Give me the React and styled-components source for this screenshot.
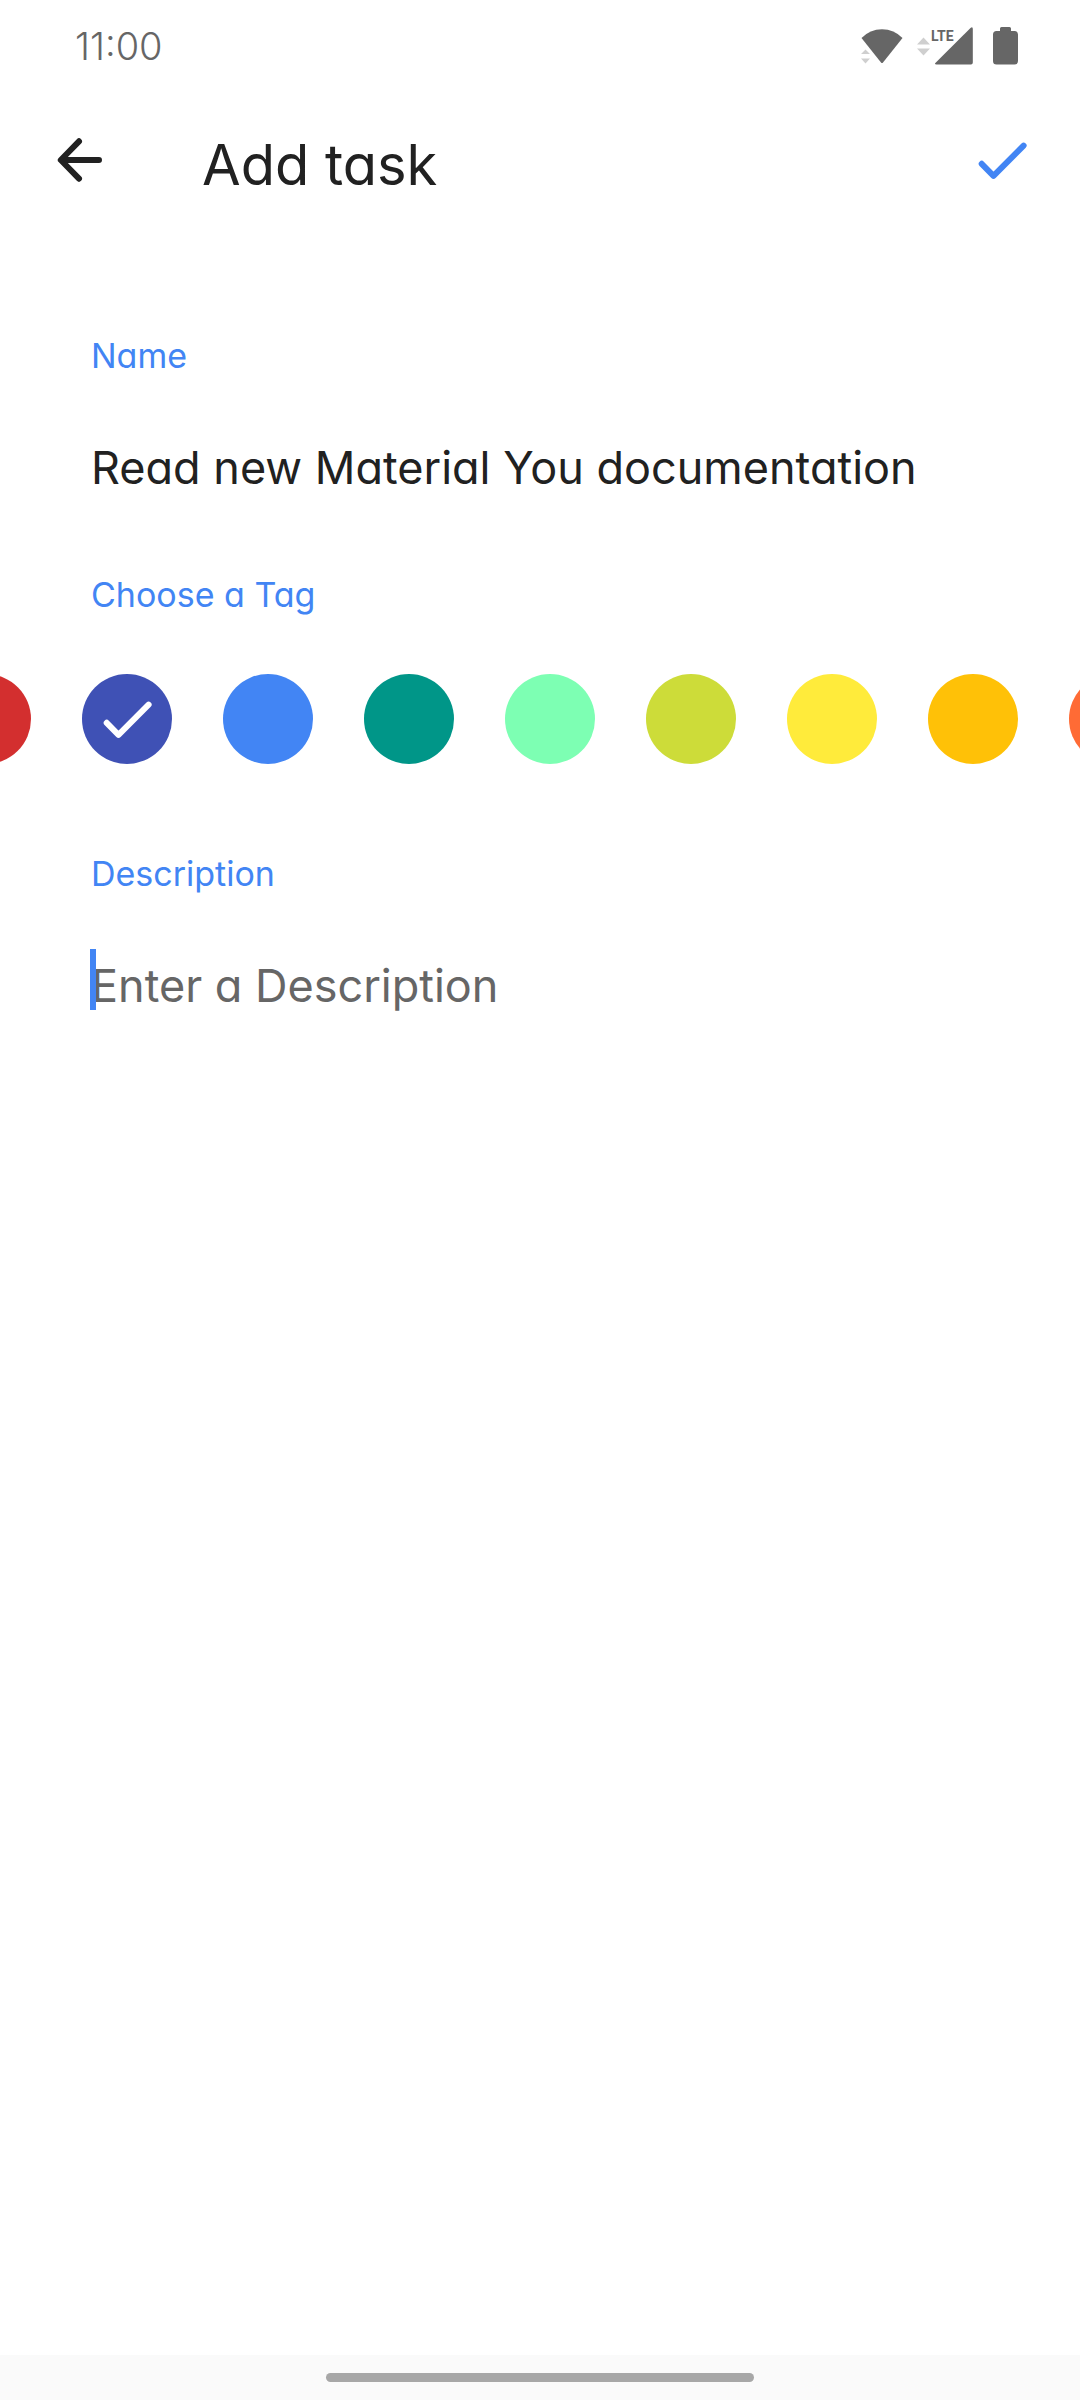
import React, { useLayoutEffect, useRef, useState } from "react";
import styled, { createGlobalStyle } from "styled-components";

const BLUE = "#4285f4";
const INK = "#212121";
const GREY = "#666666";

const GlobalStyle = createGlobalStyle`
  *, *::before, *::after { box-sizing: border-box; }
  body {
    margin: 0;
    background: #fff;
    color: ${INK};
    font-family: Inter, "Noto Sans", sans-serif;
    font-feature-settings: "cv11";
  }
`;

const Screen = styled.div`
  display: flex;
  flex-direction: column;
  min-height: 100vh;
  overflow: hidden;
`;

const StatusBar = styled.div`
  display: flex;
  align-items: center;
  justify-content: space-between;
  height: 92px;
  padding: 0 62px 0 75px;
  color: ${GREY};
`;

const Clock = styled.time`
  font-size: 38px;
  font-weight: 300;
  line-height: 48px;
`;

const StatusIcons = styled.div`
  display: flex;
  align-items: center;
  gap: 14px;

  svg {
    display: block;
  }
`;

const AppBar = styled.header`
  display: flex;
  align-items: center;
  height: 136px;
  padding: 0 46px 0 48px;
`;

const IconButton = styled.button`
  width: 64px;
  height: 64px;
  padding: 0;
  border: 0;
  background: none;
  color: ${(p) => p.$color};
  cursor: pointer;
`;

const Title = styled.h1`
  flex: 1;
  margin: 0;
  padding: 10px 0 0 90px;
  font-size: 56px;
  font-weight: 400;
  line-height: 64px;
`;

const Glyph = styled.svg`
  display: block;
  width: 64px;
  height: 64px;
  fill: none;
  stroke: currentColor;
  stroke-width: 6;
  stroke-linecap: round;
  stroke-linejoin: round;
`;

const Form = styled.form`
  flex: 1;
  display: flex;
  flex-direction: column;
  gap: 72px;
  padding-top: 104px;
`;

const Field = styled.div`
  display: flex;
  flex-direction: column;
  gap: 55px;
  padding: 0 91px;
`;

const labelText = `
  color: ${BLUE};
  font-size: 34px;
  font-weight: 400;
  line-height: 48px;
`;

const Label = styled.label`
  ${labelText}
`;

const InputBox = styled.div`
  position: relative;
`;

const TextInput = styled.input`
  display: block;
  width: 100%;
  height: 64px;
  padding: 0;
  border: 0;
  outline: 0;
  background: none;
  color: ${INK};
  font: inherit;
  font-size: 45px;
  font-feature-settings: inherit;
  caret-color: ${BLUE};

  &::placeholder {
    color: ${GREY};
    opacity: 1;
  }
`;

const Caret = styled.span`
  position: absolute;
  top: -4px;
  left: -1px;
  width: 6px;
  height: 61px;
  background: ${BLUE};
`;

const TagGroup = styled.fieldset`
  min-width: 0;
  margin: 0;
  padding: 0 0 14px;
  border: 0;
`;

const TagLegend = styled.legend`
  ${labelText}
  padding: 0 91px;
`;

const TagScroller = styled.div`
  display: flex;
  gap: 51px;
  padding: 55px 82px 0;
  overflow-x: auto;
  scrollbar-width: none;
`;

const Swatch = styled.label`
  flex: none;
  display: grid;
  place-items: center;
  width: 90px;
  height: 90px;
  border-radius: 50%;
  background: ${(p) => p.$color};
  color: #fff;
  cursor: pointer;
`;

const SwatchRadio = styled.input`
  grid-area: 1 / 1;
  appearance: none;
  width: 90px;
  height: 90px;
  margin: 0;
  border-radius: 50%;
`;

const SwatchMark = styled.span`
  grid-area: 1 / 1;
`;

const NavBar = styled.footer`
  display: grid;
  place-items: center;
  height: 45px;
  background: #fafafa;
`;

const NavHandle = styled.div`
  width: 428px;
  height: 9px;
  border-radius: 5px;
  background: #a7a7a7;
`;

const TAGS = [
  { name: "Red", color: "#d32f2f" },
  { name: "Indigo", color: "#3f51b5" },
  { name: "Blue", color: "#4285f4" },
  { name: "Teal", color: "#009688" },
  { name: "Mint", color: "#7dffb3" },
  { name: "Lime", color: "#cddc39" },
  { name: "Yellow", color: "#ffeb3b" },
  { name: "Amber", color: "#ffc107" },
  { name: "Orange", color: "#ff6b35" },
];

const CheckGlyph = () => (
  <Glyph viewBox="0 0 64 64" aria-hidden="true">
    <path d="M11.7 35.8 23.5 47.8 53.6 17.6" />
  </Glyph>
);

const BackGlyph = () => (
  <Glyph viewBox="0 0 64 64" aria-hidden="true">
    <path d="M51 32H14M31 13.3 12.8 32 31 50.7" />
    <path d="M14 32 19 28V36Z" fill="currentColor" stroke="none" />
  </Glyph>
);

const WifiIcon = () => (
  <svg width="42" height="38" viewBox="0 0 42 38" aria-hidden="true">
    <path d="M0.5 11Q9 2.2 21 2.2T41.5 11L22 35.4Q21 36.6 20 35.4Z" fill={GREY} />
    <path d="M4.5 22.5 9 27H0ZM4.5 36.5 9 31.5H0Z" fill="#cfcfcf" />
  </svg>
);

const SignalIcon = () => (
  <svg width="62" height="38" viewBox="0 0 62 38" aria-hidden="true">
    <path d="M6.5 10.5 13 17.5H0ZM6.5 28.5 13 21.5H0Z" fill="#cfcfcf" />
    <path d="M53.5 1Q55.8 -0.8 55.8 2V35.5Q55.8 37.5 54 37.5H19.5Q17 37.5 18.6 35.8Z" fill={GREY} />
    <text x="14" y="14" fontFamily="Roboto, sans-serif" fontSize="14" fontWeight="700" fill={GREY}>
      LTE
    </text>
  </svg>
);

const BatteryIcon = () => (
  <svg width="25" height="38" viewBox="0 0 25 38" aria-hidden="true">
    <path d="M7 4V1.5Q7 0 8.5 0H16.5Q18 0 18 1.5V4H21.5Q25 4 25 7.5V34Q25 37.5 21.5 37.5H3.5Q0 37.5 0 34V7.5Q0 4 3.5 4Z" fill={GREY} />
  </svg>
);

export default function App() {
  const scroller = useRef(null);
  const [name, setName] = useState("Read new Material You documentation");
  const [tag, setTag] = useState("Indigo");
  const [description, setDescription] = useState("");

  // Start with the second colour at the leading edge of the list.
  useLayoutEffect(() => {
    scroller.current.scrollLeft = 141;
  }, []);

  return (
    <Screen>
      <GlobalStyle />
      <StatusBar>
        <Clock>11:00</Clock>
        <StatusIcons>
          <WifiIcon />
          <SignalIcon />
          <BatteryIcon />
        </StatusIcons>
      </StatusBar>
      <AppBar>
        <IconButton type="button" $color={INK} aria-label="Back">
          <BackGlyph />
        </IconButton>
        <Title>Add task</Title>
        <IconButton type="submit" form="task" $color={BLUE} aria-label="Save">
          <CheckGlyph />
        </IconButton>
      </AppBar>
      <Form id="task" onSubmit={(e) => e.preventDefault()}>
        <Field>
          <Label htmlFor="name">Name</Label>
          <TextInput id="name" value={name} onChange={(e) => setName(e.target.value)} />
        </Field>
        <TagGroup>
          <TagLegend>Choose a Tag</TagLegend>
          <TagScroller ref={scroller}>
            {TAGS.map((t) => (
              <Swatch key={t.name} $color={t.color}>
                <SwatchRadio
                  type="radio"
                  name="tag"
                  aria-label={t.name}
                  checked={tag === t.name}
                  onChange={() => setTag(t.name)}
                />
                {tag === t.name && (
                  <SwatchMark>
                    <CheckGlyph />
                  </SwatchMark>
                )}
              </Swatch>
            ))}
          </TagScroller>
        </TagGroup>
        <Field>
          <Label htmlFor="description">Description</Label>
          <InputBox>
            {description === "" && <Caret />}
            <TextInput
              id="description"
              placeholder="Enter a Description"
              value={description}
              onChange={(e) => setDescription(e.target.value)}
            />
          </InputBox>
        </Field>
      </Form>
      <NavBar>
        <NavHandle />
      </NavBar>
    </Screen>
  );
}
